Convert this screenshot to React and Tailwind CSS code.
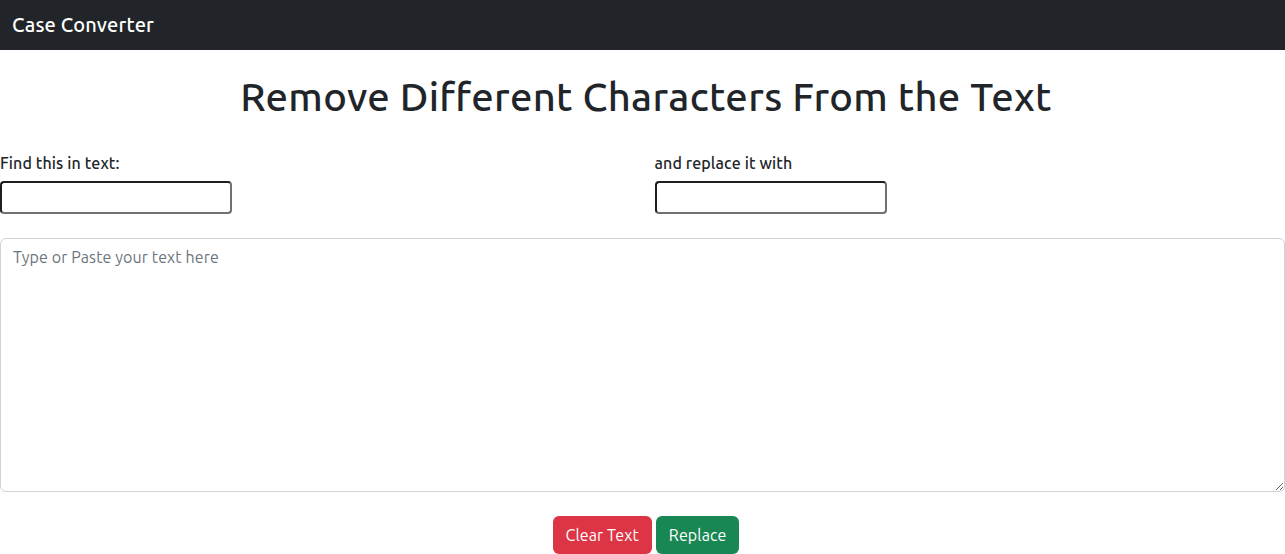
import { useState } from 'react';

function App() {
    const [buscar, setBuscar] = useState('');
    const [reemplazo, setReemplazo] = useState('');
    const [texto, setTexto] = useState('');

    const reemplazar = () => {
        if (!buscar) return;
        setTexto(texto.split(buscar).join(reemplazo));
    };

    const inputClass = "w-[232px] h-[33px] px-1 bg-white border-2 border-t-[#1e1e1e] border-l-[#1e1e1e] border-b-[#717171] border-r-[#717171] rounded-[4px] outline-none text-[15px]";
    const labelClass = "block text-[16px] leading-6 font-medium mb-[6px]";

    return (
        <div className="min-h-screen bg-white text-[#212529] tracking-[0.12px] font-['Ubuntu','Noto_Sans',sans-serif]">

            {/* NAVBAR */}
            <nav className="h-[50px] bg-[#212529] flex items-center px-3">
                <span className="text-white text-[20px] font-medium tracking-[0.15px]">Case Converter</span>
            </nav>

            <main>
                <h1 className="text-center text-[40px] leading-[48px] font-medium tracking-[0.3px] mt-[23px] mb-[30px] pl-[7px]">
                    Remove Different Characters From the Text
                </h1>

                {/* buscar / reemplazar */}
                <div className="flex">
                    <div className="w-1/2">
                        <label className={labelClass}>Find this in text:</label>
                        <input className={inputClass} value={buscar} onChange={(e) => setBuscar(e.target.value)} />
                    </div>
                    <div className="w-1/2 pl-[12px]">
                        <label className={labelClass}>and replace it with</label>
                        <input className={inputClass} value={reemplazo} onChange={(e) => setReemplazo(e.target.value)} />
                    </div>
                </div>

                <textarea
                    className="block w-full h-[254px] mt-[24px] px-3 py-[6px] text-[16px] leading-6 border border-[#ced4da] rounded-[6px] outline-none placeholder:text-[#6c757d]"
                    placeholder="Type or Paste your text here"
                    value={texto}
                    onChange={(e) => setTexto(e.target.value)}
                />

                <div className="flex justify-center gap-1 mt-[24px] pl-[7px]">
                    <button
                        onClick={() => setTexto('')}
                        className="h-[38px] px-[13px] bg-[#dc3545] text-white text-[16px] rounded-[6px]"
                    >
                        Clear Text
                    </button>
                    <button
                        onClick={reemplazar}
                        className="h-[38px] px-[13px] bg-[#198754] text-white text-[16px] rounded-[6px]"
                    >
                        Replace
                    </button>
                </div>
            </main>
        </div>
    );
}

export default App;
